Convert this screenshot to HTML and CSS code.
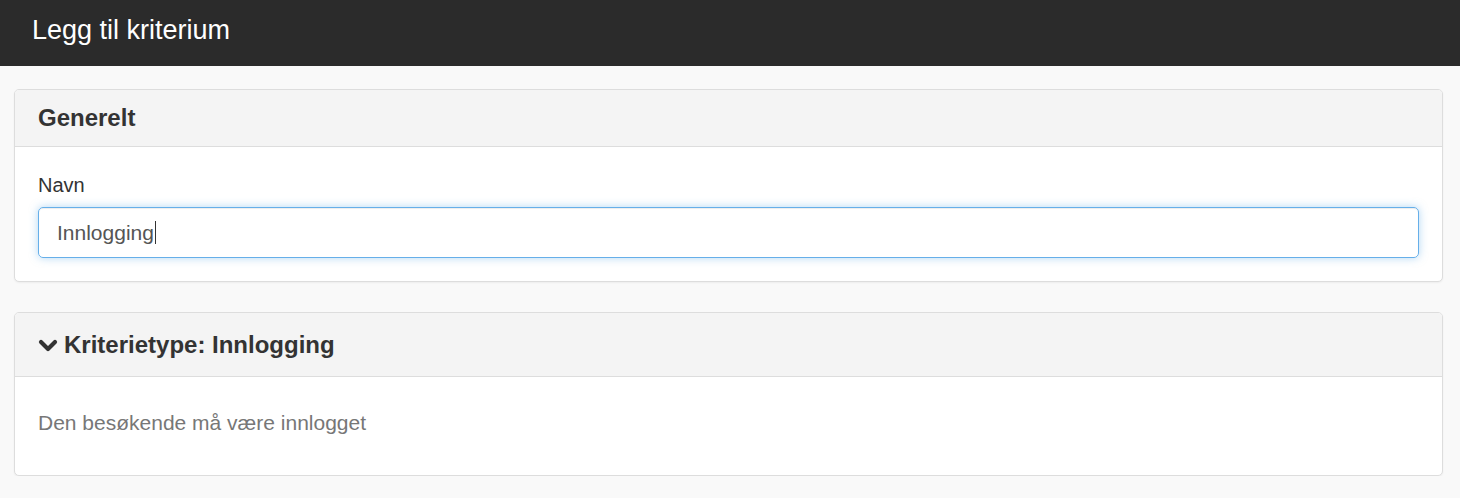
FILE: index.html
```html
<!DOCTYPE html>
<html>
<head>
  <title>Legg til kriterium</title>
  <link rel="stylesheet" href="styles.css">
</head>
<body>
  <div class="topbar">
    <h1>Legg til kriterium</h1>
  </div>

  <div class="content">
    <div class="panel">
      <div class="panel-heading">
        <h2>Generelt</h2>
      </div>
      <div class="panel-body">
        <label class="field-label">Navn</label>
        <div class="input focused"><span>Innlogging</span><span class="caret"></span></div>
      </div>
    </div>

    <div class="panel">
      <div class="panel-heading tall">
        <h2>
          <svg class="chevron" width="20" height="14" viewBox="0 0 20 14">
            <polyline points="3,3 10,10 17,3" fill="none" stroke="#333" stroke-width="4.2" stroke-linecap="round" stroke-linejoin="round"/>
          </svg>
          Kriterietype: Innlogging
        </h2>
      </div>
      <div class="panel-body description">
        <p>Den besøkende må være innlogget</p>
      </div>
    </div>
  </div>
</body>
</html>
```

FILE: styles.css
```css
body {
  margin: 0;
  font-family: "Liberation Sans", Arial, sans-serif;
  background: #f9f9f9;
  color: #333;
}

.topbar {
  background: #2b2b2b;
  height: 66px;
  box-sizing: border-box;
  padding: 12px 32px 0;
}

.topbar h1 {
  margin: 0;
  font-size: 27px;
  font-weight: normal;
  line-height: 36px;
  color: #fff;
}

.content {
  padding: 23px 17px 0 14px;
  display: flex;
  flex-direction: column;
  gap: 30px;
}

.panel {
  background: #fff;
  border: 1px solid #ddd;
  border-radius: 5px;
  box-shadow: 0 1px 2px rgba(0,0,0,0.05);
  overflow: hidden;
}

.panel-heading {
  background: #f4f4f4;
  border-bottom: 1px solid #ddd;
  padding: 14px 23px;
}

.panel-heading.tall {
  padding: 18px 23px 17px;
}

.panel-heading h2 {
  margin: 0;
  font-size: 24px;
  font-weight: bold;
  line-height: 28px;
  display: flex;
  align-items: center;
  gap: 6px;
}

.chevron {
  margin-top: 1px;
}

.panel-body {
  padding: 24px 23px 23px;
}

.field-label {
  display: block;
  font-size: 20px;
  line-height: 28px;
  margin-bottom: 8px;
}

.input {
  height: 51px;
  box-sizing: border-box;
  border: 1px solid #66afe9;
  border-radius: 5px;
  padding: 0 18px;
  font-size: 21px;
  color: #555;
  display: flex;
  align-items: center;
}

.input.focused {
  box-shadow: inset 0 1px 1px rgba(0,0,0,0.075), 0 0 8px rgba(102,175,233,0.5);
}

.caret {
  display: inline-block;
  width: 1px;
  height: 23px;
  background: #333;
  margin-left: 1px;
}

.description {
  padding: 32px 23px 38px;
}

.description p {
  margin: 0;
  font-size: 21px;
  line-height: 28px;
  color: #777;
}
```
